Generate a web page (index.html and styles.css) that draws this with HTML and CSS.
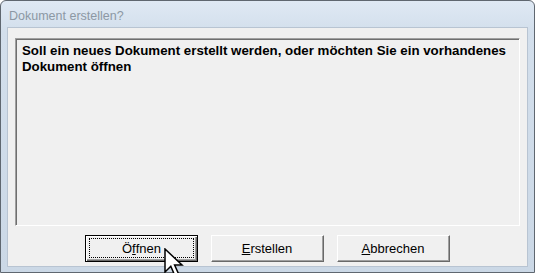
FILE: index.html
```html
<!DOCTYPE html>
<html lang="de">
<head>
    <meta charset="UTF-8">
    <title>Dokument erstellen?</title>
    <link rel="stylesheet" href="styles.css">
</head>
<body>
    <div class="window">
        <div class="title-bar">Dokument erstellen?</div>
        <div class="client">
            <div class="message">
                Soll ein neues Dokument erstellt werden, oder möchten Sie ein vorhandenes Dokument öffnen
            </div>
            <div class="buttons">
                <button class="btn default"><span class="focus">Ö<u>f</u>fnen</span></button>
                <button class="btn"><span class="focus"><u>E</u>rstellen</span></button>
                <button class="btn"><span class="focus"><u>A</u>bbrechen</span></button>
            </div>
        </div>
    </div>

    <svg class="cursor" width="26" height="34" viewBox="0 0 26 34">
        <path d="M1 1 L1 24 L6.8 18.3 L11 28 L14.8 26.4 L10.6 17 L18 17 Z" fill="#fff" stroke="#000" stroke-width="1.5" stroke-linejoin="miter"/>
    </svg>
</body>
</html>
```

FILE: styles.css
```css
* {
    margin: 0;
    padding: 0;
    box-sizing: border-box;
}

body {
    width: 535px;
    height: 273px;
    overflow: hidden;
    background: #fff;
    position: relative;
}

.window {
    width: 535px;
    height: 273px;
    border: 1px solid #5f6770;
    border-radius: 6px 6px 0 0;
    background: linear-gradient(#dfe9f4, #d3dfec 30px, #cbd8e6);
    display: flex;
    flex-direction: column;
    padding: 0 6px 5px 6px;
}

.title-bar {
    height: 26px;
    padding: 8px 0 0 2px;
    font-family: "Liberation Sans", Arial, sans-serif;
    font-size: 12.5px;
    line-height: 14px;
    color: #8c98a4;
}

.client {
    flex: 1;
    background: #f0f0f0;
    border: 1px solid #b8c4d2;
    display: flex;
    flex-direction: column;
    padding: 10px 7px 4px 7px;
}

.message {
    height: 188px;
    border-top: 1px solid #a0a0a0;
    border-left: 1px solid #a0a0a0;
    border-right: 1px solid #fff;
    border-bottom: 1px solid #fff;
    box-shadow: inset 1px 1px 0 #6f6f6f;
    padding: 4px 6px;
    font-family: "Liberation Sans", Arial, sans-serif;
    font-weight: bold;
    font-size: 13.3px;
    line-height: 16px;
    color: #000;
}

.buttons {
    display: flex;
    justify-content: center;
    gap: 13px;
    margin-top: 9px;
}

.btn {
    width: 113px;
    height: 27px;
    background: #f0f0f0;
    border-top: 1px solid #fff;
    border-left: 1px solid #fff;
    border-right: 1px solid #696969;
    border-bottom: 1px solid #696969;
    box-shadow: inset -1px -1px 0 #a0a0a0;
    font-family: "Liberation Sans", Arial, sans-serif;
    font-size: 13px;
    color: #000;
    padding: 2px 3px 3px 2px;
    display: flex;
}

.btn .focus {
    flex: 1;
    display: flex;
    align-items: center;
    justify-content: center;
    border: 1px solid transparent;
}

.btn.default {
    border: 1px solid #000;
    box-shadow: inset 1px 1px 0 #fff, inset -1px -1px 0 #696969, inset -2px -2px 0 #a0a0a0;
    padding: 2px 3px 3px 3px;
}

.btn.default .focus {
    border: 1px dotted #000;
}

.cursor {
    position: absolute;
    left: 164px;
    top: 248px;
}
```
